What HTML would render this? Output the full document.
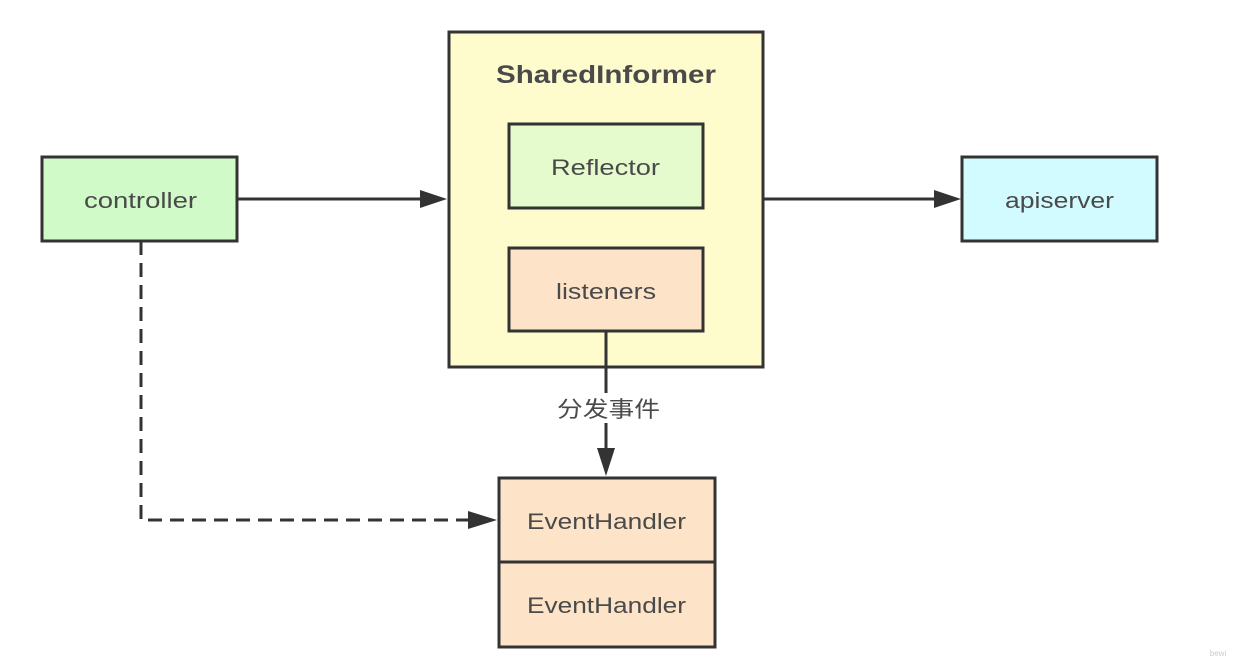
<!DOCTYPE html>
<html><head><style>html,body{margin:0;padding:0;background:#fff}svg{display:block}text{font-family:"Liberation Sans","Noto Sans CJK SC",sans-serif;fill:#4a4a4a}</style></head>
<body>
<svg width="1237" height="661" viewBox="0 0 1237 661">
<g stroke="#333" stroke-width="3">
<rect x="449" y="32" width="314" height="335" fill="#fefccc"/>
<rect x="509" y="124" width="194" height="84" fill="#e6fbcd"/>
<rect x="509" y="248" width="194" height="83" fill="#fde4c8"/>
<rect x="42" y="157" width="195" height="84" fill="#d0fbc8"/>
<rect x="962" y="157" width="195" height="84" fill="#d1fbfe"/>
<rect x="499" y="478" width="216" height="169" fill="#fde4c8"/>
<line x1="499" y1="562" x2="715" y2="562"/>
</g>
<g stroke="#333" stroke-width="3" fill="none">
<path d="M237 199 H420"/><path d="M420 190 L447 199 L420 208 Z" fill="#333" stroke="none"/>
<path d="M763 199 H934"/><path d="M934 190 L961 199 L934 208 Z" fill="#333" stroke="none"/>
<path d="M606 331 V448"/><path d="M597 448 L606 476 L615 448 Z" fill="#333" stroke="none"/>
<path d="M141 241 V520 H468" stroke-dasharray="14 8"/><path d="M468 511 L497 520 L468 529 Z" fill="#333" stroke="none"/>
</g>
<rect x="552" y="393" width="110" height="30" fill="#fff"/>
<text x="557" y="417" font-size="22" textLength="103" lengthAdjust="spacingAndGlyphs">分发事件</text>
<text x="496" y="83" font-size="25" font-weight="bold" textLength="220" lengthAdjust="spacingAndGlyphs">SharedInformer</text>
<text x="551" y="175" font-size="22" textLength="109" lengthAdjust="spacingAndGlyphs">Reflector</text>
<text x="556" y="299" font-size="22" textLength="100" lengthAdjust="spacingAndGlyphs">listeners</text>
<text x="84" y="208" font-size="22" textLength="113" lengthAdjust="spacingAndGlyphs">controller</text>
<text x="1005" y="208" font-size="22" textLength="109" lengthAdjust="spacingAndGlyphs">apiserver</text>
<text x="527" y="529" font-size="22" textLength="159" lengthAdjust="spacingAndGlyphs">EventHandler</text>
<text x="527" y="613" font-size="22" textLength="159" lengthAdjust="spacingAndGlyphs">EventHandler</text>
<text x="1218" y="656" font-size="8" text-anchor="middle" style="fill:#ccc">bewi</text>
</svg>
</body></html>
